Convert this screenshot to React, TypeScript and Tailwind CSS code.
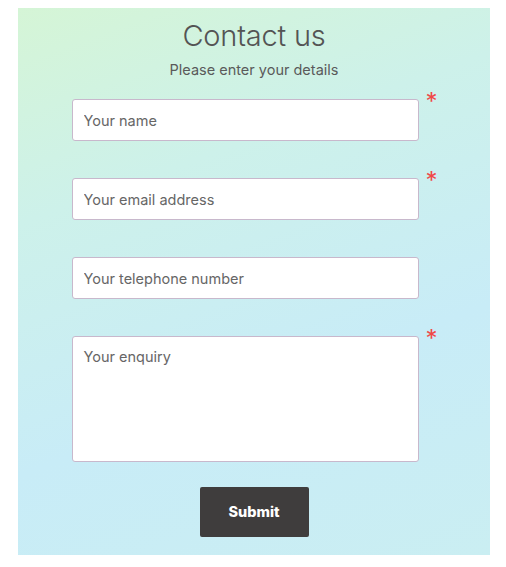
export default function App() {
  const fields = [
    { label: 'Your name', required: true },
    { label: 'Your email address', required: true },
    { label: 'Your telephone number', required: false },
  ]

  return (
    <div className="min-h-[567px] bg-white pt-2 font-['Inter',sans-serif]">
      <section className="ml-[18px] flex w-[472px] flex-col items-center bg-[linear-gradient(160deg,#d5f5d6_0%,#cdf1ea_30%,#c8ecf7_65%,#caeef2_100%)] pb-[18px]">
        <h1 className="mt-[10px] text-[29px] font-light leading-[36px] tracking-[-0.2px] text-[#545454]">
          Contact us
        </h1>
        <p className="mt-[6px] text-[14.5px] leading-[20px] text-[#5a5a5a]">
          Please enter your details
        </p>

        <form className="ml-[1px] mt-[19px] flex flex-col items-center gap-[37px]">
          {fields.map((f) => (
            <div key={f.label} className="flex w-[366px] items-start">
              <input
                placeholder={f.label}
                className="h-[42px] w-[347px] rounded-[3px] border border-[#c8b8cc] bg-white px-[11px] text-[14.5px] text-[#555] placeholder:text-[#666] outline-none"
              />
              <span className="ml-[7px] -mt-[9px] w-[12px] text-[24px] leading-[24px] text-[#f04848]">
                {f.required ? '*' : ''}
              </span>
            </div>
          ))}
          <div className="flex w-[366px] items-start">
            <textarea
              placeholder="Your enquiry"
              className="h-[126px] w-[347px] resize-none rounded-[3px] border border-[#c8b8cc] bg-white px-[11px] py-[9px] text-[14.5px] text-[#555] placeholder:text-[#666] outline-none"
            />
            <span className="ml-[7px] -mt-[9px] w-[12px] text-[24px] leading-[24px] text-[#f04848]">*</span>
          </div>
        </form>

        <button className="mt-[25px] h-[50px] w-[109px] rounded-[2px] bg-[#3f3d3d] text-[14.5px] font-extrabold text-white">
          Submit
        </button>
      </section>
    </div>
  )
}
